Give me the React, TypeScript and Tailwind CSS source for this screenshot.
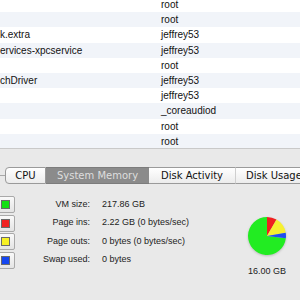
const rows = [
  { name: "", user: "root" },
  { name: "", user: "root" },
  { name: "k.extra", user: "jeffrey53" },
  { name: "ervices-xpcservice", user: "jeffrey53" },
  { name: "", user: "root" },
  { name: "chDriver", user: "jeffrey53" },
  { name: "", user: "jeffrey53" },
  { name: "", user: "_coreaudiod" },
  { name: "", user: "root" },
  { name: "", user: "root" },
];

const stats = [
  { color: "bg-[#14e014]", label: "VM size:", value: "217.86 GB" },
  { color: "bg-[#f02222]", label: "Page ins:", value: "2.22 GB (0 bytes/sec)" },
  { color: "bg-[#f6f024]", label: "Page outs:", value: "0 bytes (0 bytes/sec)" },
  { color: "bg-[#1446f0]", label: "Swap used:", value: "0 bytes" },
];

function Pie() {
  return (
    <svg width="38" height="38" viewBox="0 0 38 38">
      <path d="M19 19 L37.86 21.32 A19 19 0 1 1 19 0 Z" fill="#22ec22" />
      <path d="M19 19 L19 0 A19 19 0 0 1 28.5 2.55 Z" fill="#f02020" />
      <path d="M19 19 L28.5 2.55 A19 19 0 0 1 37.71 15.7 Z" fill="#f6f030" />
      <path d="M19 19 L37.71 15.7 A19 19 0 0 1 37.86 21.32 Z" fill="#1f4ff0" />
    </svg>
  );
}

export default function App() {
  return (
    <div
      className="w-[300px] h-[300px] overflow-hidden flex flex-col bg-[#e9e9e9] text-[#111]"
      style={{ fontFamily: "'Liberation Sans', Arial, sans-serif" }}
    >
      {/* Process table */}
      <div className="h-[149px] shrink-0 overflow-hidden bg-white border-b border-[#c9c9c9]">
        <div className="-mt-[3px] flex flex-col">
          {rows.map((row, i) => (
            <div
              key={i}
              className={`h-[15.2px] shrink-0 flex items-center text-[10px] ${
                i % 2 === 1 ? "bg-[#f1f4f9]" : "bg-white"
              }`}
            >
              <div className="w-[161px] whitespace-nowrap">{row.name}</div>
              <div>{row.user}</div>
            </div>
          ))}
        </div>
      </div>

      {/* Bottom panel */}
      <div className="flex flex-col">
        {/* Segmented tabs */}
        <div className="relative mt-[18px] h-[17px] flex">
          <div className="absolute left-0 right-0 top-[8px] h-px bg-[#a8a8a8]" />
          <div
            className="relative ml-[5px] flex h-[17px] text-[10px] whitespace-nowrap"
            style={{ fontFamily: "'DejaVu Sans', sans-serif" }}
          >
            <div className="w-[41px] flex items-center justify-center rounded-l-[4px] border border-[#9a9a9a] bg-gradient-to-b from-white to-[#ececec] text-[#111]">
              CPU
            </div>
            <div className="w-[103px] flex items-center justify-center border-y border-[#7c7c7c] bg-[#8b8b8b] text-[#dedede]">
              System Memory
            </div>
            <div className="w-[86px] flex items-center justify-center border-y border-[#9a9a9a] bg-gradient-to-b from-white to-[#ececec] text-[#111]">
              Disk Activity
            </div>
            <div className="w-[90px] pl-[10px] flex items-center border-y border-l border-[#9a9a9a] border-l-[#cfcfcf] bg-gradient-to-b from-white to-[#ececec] text-[#111]">
              Disk Usage
            </div>
          </div>
        </div>

        {/* Stats + pie */}
        <div className="flex mt-[12px]">
          <div className="flex flex-col gap-[1.5px]">
            {stats.map((s) => (
              <div key={s.label} className="flex items-center h-[17px]">
                <div className="-ml-[3px] w-[18px] h-[17px] flex items-center justify-center border border-[#a9a9a9] rounded-[2px] bg-gradient-to-b from-[#fafafa] to-[#e4e4e4]">
                  <div className={`ml-[-1px] w-[9px] h-[9px] border border-[#6a6a6a] ${s.color}`} />
                </div>
                <div className="w-[75px] text-right text-[9px] text-[#222] whitespace-nowrap">
                  {s.label}
                </div>
                <div className="ml-[12px] text-[9px] text-[#222] whitespace-nowrap">
                  {s.value}
                </div>
              </div>
            ))}
          </div>
          <div className="ml-auto mr-[14px] mt-[21px] w-[38px] flex flex-col items-center">
            <div className="drop-shadow-[0_1px_1px_rgba(0,0,0,0.2)]">
              <Pie />
            </div>
            <div className="mt-[10px] text-[9px] text-[#222] whitespace-nowrap">
              16.00 GB
            </div>
          </div>
        </div>
      </div>
    </div>
  );
}
